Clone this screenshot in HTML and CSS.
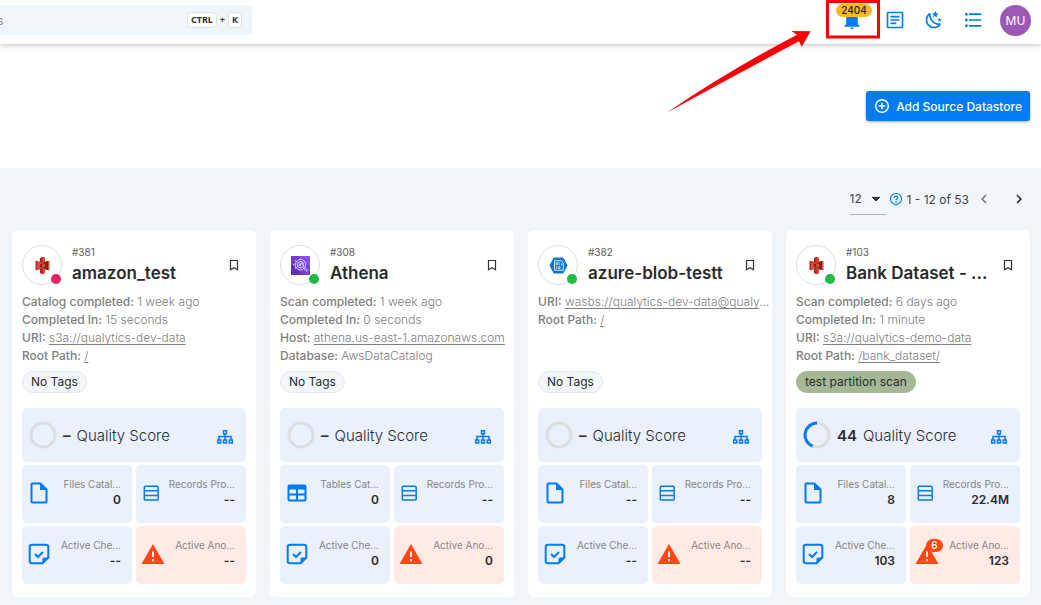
FILE: index.html
```html
<!DOCTYPE html>
<html lang="en">
<head>
<meta charset="utf-8">
<title>Datastores</title>
<meta name="viewport" content="width=device-width, initial-scale=1">
<link rel="stylesheet" href="styles.css">
</head>
<body>
<svg class="sprite" aria-hidden="true">
  <symbol id="i-s3" viewBox="-1 -1 26 26">
    <path fill="#8c1f14" d="M4 5.5 2.5 6v12l1.500.5 4-6.500z"/>
    <path fill="#e0483c" d="M4 5.500 12 7.500v9l-8 2z"/>
    <path fill="#8c1f14" d="M20 5.500 12 7.500v9l8 2z"/>
    <path fill="#b93126" d="m20 5.500 1.500.5v12l-1.500.5z"/>
    <path fill="#a32a20" d="M12 0 8.500 1.800v5.700l3.500 1 3.500-1V1.800zM12 24l-3.500-1.800v-5.700l3.500-1 3.500 1v5.700z"/>
    <path fill="#d8453a" d="m12 0 3.500 1.800v5.700l-3.500 1zM12 24l3.500-1.800v-5.700l-3.500-1z"/>
    <path fill="#8c1f14" d="M8.500 9.800 12 9.300v5.400l-3.500-.5z"/>
    <path fill="#e0483c" d="m15.500 9.800-3.500-.5v5.400l3.500-.5z"/>
  </symbol>
  <symbol id="i-athena" viewBox="0 0 24 24">
    <path fill="#7440d0" d="M0 0h24v24H0z"/>
    <path fill="#4d27a8" d="M0 10v14h14z" opacity=".6"/>
    <path fill="#a166ff" d="M10 0h14v14z" opacity=".45"/>
    <g fill="none" stroke="#e4d6ff" stroke-width="1.200">
      <circle cx="12" cy="11" r="6.500"/><circle cx="12" cy="11" r="4"/>
      <path d="M10.500 13V9.500M12.200 13V9h2v2.500M4 11H2.500M12 3V4.500M5 5.500l2 1.500M5 16l2-1.500"/>
      <path d="m15.500 15 1.300-1.300 4.500 4.500-1.500 1.500z"/>
    </g>
  </symbol>
  <symbol id="i-azure" viewBox="0 0 24 24">
    <path fill="#0b78d4" d="m.5 12 5.500-10h12l5.500 10-5.500 10H6z"/>
    <path fill="none" stroke="#fff" stroke-width="1.100" d="M7 6h8.500L18 8.500V18H7z"/>
    <path fill="none" stroke="#fff" stroke-width=".9" d="M9 8.500h1.800v2.500H9zM12.800 8v3.500M9.500 13v3.500M12 13.500h1.800v2.500H12zM15.700 9v3"/>
  </symbol>
  <symbol id="i-bell" viewBox="0 0 24 24"><path fill="currentColor" d="M21 19v1H3v-1l2-2v-6c0-3.100 2.030-5.830 5-6.710V4a2 2 0 0 1 4 0v.29c2.970.88 5 3.610 5 6.710v6zm-7 2a2 2 0 0 1-4 0"/></symbol>
  <symbol id="i-article" viewBox="0 0 24 24"><path fill="none" stroke="currentColor" stroke-width="2" d="M4 3h16q1 0 1 1v16q0 1-1 1H4q-1 0-1-1V4q0-1 1-1zM6.500 8h11M6.500 12h11M6.500 16h7"/></symbol>
  <symbol id="i-moon" viewBox="0 0 24 24"><path fill="currentColor" d="M17.750 4.090 15.220 6.030 16.130 9.090 13.500 7.280 10.870 9.090 11.780 6.030 9.250 4.090 12.440 4 13.500 1 14.560 4zM21.250 11 19.610 12.250 20.200 14.230 18.500 13.060 16.800 14.230 17.390 12.250 15.750 11 17.810 10.950 18.500 9 19.190 10.950zM18.970 15.950C19.800 15.870 20.690 17.050 20.160 17.800 19.840 18.250 19.500 18.670 19.080 19.070 15.170 23 8.840 23 4.940 19.070 1.030 15.170 1.030 8.830 4.940 4.930 5.340 4.530 5.760 4.170 6.210 3.850 6.960 3.320 8.140 4.210 8.060 5.040 7.790 7.900 8.750 10.870 10.950 13.060 13.140 15.260 16.100 16.220 18.970 15.950M17.330 17.970C14.500 17.810 11.700 16.640 9.530 14.500 7.360 12.310 6.200 9.500 6.040 6.680 3.230 9.820 3.340 14.640 6.350 17.660 9.370 20.670 14.190 20.780 17.330 17.970Z"/></symbol>
  <symbol id="i-list" viewBox="0 0 24 24"><path fill="currentColor" d="M7 4h15v2H7zM7 11h15v2H7zM7 18h15v2H7zM2.500 3.500h3v3h-3zM2.500 10.500h3v3h-3zM2.500 17.500h3v3h-3z"/></symbol>
  <symbol id="i-plus" viewBox="0 0 24 24"><path fill="none" stroke="currentColor" stroke-width="2.200" d="M12 2.500a9.500 9.500 0 1 1 0 19 9.500 9.500 0 0 1 0-19M12 7v10M7 12h10"/></symbol>
  <symbol id="i-help" viewBox="0 0 24 24"><path fill="none" stroke="currentColor" stroke-width="2" d="M12 2.500a9.500 9.500 0 1 1 0 19 9.500 9.500 0 0 1 0-19M9 10c0-4 6-4 6-.3 0 2.300-3 2.300-3 5"/><path fill="currentColor" d="M11 16h2v2.300h-2z"/></symbol>
  <symbol id="i-prev" viewBox="0 0 24 24"><path fill="currentColor" d="M15.410 16.580 10.830 12l4.580-4.590L14 6l-6 6 6 6z"/></symbol>
  <symbol id="i-next" viewBox="0 0 24 24"><path fill="currentColor" d="M8.590 16.580 13.170 12 8.590 7.410 10 6l6 6-6 6z"/></symbol>
  <symbol id="i-mark" viewBox="0 0 12 12"><path fill="none" stroke="currentColor" stroke-width="1.200" d="M2.500 1.500h7v9.200L6 8.700l-3.500 2z"/></symbol>
  <symbol id="i-tree" viewBox="0 0 18 16"><path fill="none" stroke="currentColor" stroke-width="1.500" d="M7.500 1.700h3v3h-3zM9 4.700v6M3 10.700V7.500h12v3.200M1.700 11h3v3h-3zM7.500 11h3v3h-3zM13.300 11h3v3h-3z"/></symbol>
  <symbol id="i-file" viewBox="0 0 24 24"><path fill="none" stroke="currentColor" stroke-width="2" d="M5 2.500h8.500L19.500 8.500v12q0 1-1 1h-13q-1 0-1-1V3.500q0-1 .5-1z"/><path fill="currentColor" d="M13 2v7h7z"/></symbol>
  <symbol id="i-table" viewBox="0 0 24 24"><path fill="currentColor" fill-rule="evenodd" d="M4.500 3.500h15a2 2 0 0 1 2 2v13a2 2 0 0 1-2 2h-15a2 2 0 0 1-2-2v-13a2 2 0 0 1 2-2M4.500 8.500v4H11v-4zM13 8.500v4h6.500v-4zM4.500 14.500v4H11v-4zM13 14.500v4h6.500v-4z"/></symbol>
  <symbol id="i-rows" viewBox="0 0 24 24"><path fill="none" stroke="currentColor" stroke-width="1.500" d="M4.500 5.200h11.500q1.200 0 1.200 1.200v11.500q0 1.200-1.200 1.200H4.500q-1.200 0-1.200-1.200V6.400q0-1.200 1.200-1.200zM3.500 9.800h13.500M3.500 14.500h13.500"/></symbol>
  <symbol id="i-check" viewBox="0 0 24 24"><path fill="none" stroke="currentColor" stroke-width="2" d="M15.500 21.300H5q-2.300 0-2.300-2.300V5Q2.700 2.700 5 2.700h14q2.300 0 2.300 2.300v10.500zM8 12l3 3 5-5"/><path fill="currentColor" d="M15.500 22v-5q0-1.500 1.500-1.500h5z"/></symbol>
  <symbol id="i-alert" viewBox="0 0 24 24"><path fill="currentColor" fill-rule="evenodd" d="M12 2 23.500 22H.5zM11 9.500v5.500h2V9.500zM11 17v2.200h2V17z"/></symbol>
</svg>

<header class="topbar">
  <div class="search">
    <input class="search-input" type="text" placeholder="s" aria-label="Search">
    <kbd>CTRL</kbd><span class="plus">+</span><kbd>K</kbd>
  </div>
  <nav class="actions">
    <button class="icon-btn bell" aria-label="Notifications"><svg><use href="#i-bell"/></svg><span class="count">2404</span></button>
    <button class="icon-btn" aria-label="News"><svg><use href="#i-article"/></svg></button>
    <button class="icon-btn" aria-label="Dark mode"><svg><use href="#i-moon"/></svg></button>
    <button class="icon-btn" aria-label="Menu"><svg><use href="#i-list"/></svg></button>
    <button class="user">MU</button>
  </nav>
  <svg class="callout" viewBox="0 0 214 113" aria-hidden="true">
    <path fill="none" stroke="#fb0007" stroke-width="3" d="M161.500 1.500h51v35.500h-51z"/>
    <path fill="#fb0007" d="M.7 112.700Q62 71 131 34.700L125.300 31l19.400.300-9 15.400-2.700-5.400Q68 76 .7 112.700z"/>
  </svg>
</header>

<section class="hero">
  <button class="add"><svg><use href="#i-plus"/></svg>Add Source Datastore</button>
</section>

<main class="content">
  <div class="pager">
    <select class="page-size" aria-label="Items per page"><option>12</option></select>
    <svg class="help"><use href="#i-help"/></svg>
    <span class="range">1 - 12 of 53</span>
    <button class="page-btn prev" aria-label="Previous page"><svg><use href="#i-prev"/></svg></button>
    <button class="page-btn" aria-label="Next page"><svg><use href="#i-next"/></svg></button>
  </div>

  <div class="cards">
    <article class="card">
      <div class="card-head">
        <div class="logo"><svg><use href="#i-s3"/></svg><i class="dot failed"></i></div>
        <div class="names"><span class="id">#381</span><h2>amazon_test</h2></div>
        <button class="mark" aria-label="Bookmark"><svg><use href="#i-mark"/></svg></button>
      </div>
      <div class="facts">
        <p><b>Catalog completed:</b> 1 week ago</p>
        <p><b>Completed In:</b> 15 seconds</p>
        <p><b>URI:</b> <a href="#">s3a://qualytics-dev-data</a></p>
        <p><b>Root Path:</b> <a href="#">/</a></p>
      </div>
      <span class="chip">No Tags</span>
      <div class="stats">
        <div class="score"><svg class="ring" viewBox="0 0 28 28"><circle cx="14" cy="14" r="12"/></svg><strong>–</strong><span>Quality Score</span><svg class="tree"><use href="#i-tree"/></svg></div>
        <div class="stat"><svg><use href="#i-file"/></svg><div><span>Files Catal...</span><b>0</b></div></div>
        <div class="stat"><svg><use href="#i-rows"/></svg><div><span>Records Pro...</span><b>--</b></div></div>
        <div class="stat"><svg><use href="#i-check"/></svg><div><span>Active Che...</span><b>--</b></div></div>
        <div class="stat warn"><svg><use href="#i-alert"/></svg><div><span>Active Ano...</span><b>--</b></div></div>
      </div>
    </article>

    <article class="card">
      <div class="card-head">
        <div class="logo"><svg><use href="#i-athena"/></svg><i class="dot"></i></div>
        <div class="names"><span class="id">#308</span><h2>Athena</h2></div>
        <button class="mark" aria-label="Bookmark"><svg><use href="#i-mark"/></svg></button>
      </div>
      <div class="facts">
        <p><b>Scan completed:</b> 1 week ago</p>
        <p><b>Completed In:</b> 0 seconds</p>
        <p><b>Host:</b> <a href="#">athena.us-east-1.amazonaws.com</a></p>
        <p><b>Database:</b> AwsDataCatalog</p>
      </div>
      <span class="chip">No Tags</span>
      <div class="stats">
        <div class="score"><svg class="ring" viewBox="0 0 28 28"><circle cx="14" cy="14" r="12"/></svg><strong>–</strong><span>Quality Score</span><svg class="tree"><use href="#i-tree"/></svg></div>
        <div class="stat"><svg><use href="#i-table"/></svg><div><span>Tables Cat...</span><b>0</b></div></div>
        <div class="stat"><svg><use href="#i-rows"/></svg><div><span>Records Pro...</span><b>--</b></div></div>
        <div class="stat"><svg><use href="#i-check"/></svg><div><span>Active Che...</span><b>0</b></div></div>
        <div class="stat warn"><svg><use href="#i-alert"/></svg><div><span>Active Ano...</span><b>0</b></div></div>
      </div>
    </article>

    <article class="card">
      <div class="card-head">
        <div class="logo"><svg><use href="#i-azure"/></svg><i class="dot"></i></div>
        <div class="names"><span class="id">#382</span><h2>azure-blob-testt</h2></div>
        <button class="mark" aria-label="Bookmark"><svg><use href="#i-mark"/></svg></button>
      </div>
      <div class="facts">
        <p><b>URI:</b> <a href="#">wasbs://qualytics-dev-data@qualy</a>...</p>
        <p><b>Root Path:</b> <a href="#">/</a></p>
      </div>
      <span class="chip">No Tags</span>
      <div class="stats">
        <div class="score"><svg class="ring" viewBox="0 0 28 28"><circle cx="14" cy="14" r="12"/></svg><strong>–</strong><span>Quality Score</span><svg class="tree"><use href="#i-tree"/></svg></div>
        <div class="stat"><svg><use href="#i-file"/></svg><div><span>Files Catal...</span><b>--</b></div></div>
        <div class="stat"><svg><use href="#i-rows"/></svg><div><span>Records Pro...</span><b>--</b></div></div>
        <div class="stat"><svg><use href="#i-check"/></svg><div><span>Active Che...</span><b>--</b></div></div>
        <div class="stat warn"><svg><use href="#i-alert"/></svg><div><span>Active Ano...</span><b>--</b></div></div>
      </div>
    </article>

    <article class="card">
      <div class="card-head">
        <div class="logo"><svg><use href="#i-s3"/></svg><i class="dot"></i></div>
        <div class="names"><span class="id">#103</span><h2>Bank Dataset - ...</h2></div>
        <button class="mark" aria-label="Bookmark"><svg><use href="#i-mark"/></svg></button>
      </div>
      <div class="facts">
        <p><b>Scan completed:</b> 6 days ago</p>
        <p><b>Completed In:</b> 1 minute</p>
        <p><b>URI:</b> <a href="#">s3a://qualytics-demo-data</a></p>
        <p><b>Root Path:</b> <a href="#">/bank_dataset/</a></p>
      </div>
      <span class="chip tag">test partition scan</span>
      <div class="stats">
        <div class="score"><svg class="ring" viewBox="0 0 28 28"><circle cx="14" cy="14" r="12"/><path d="M14 2A12 12 0 0 0 9.500 25.100"/></svg><strong>44</strong><span>Quality Score</span><svg class="tree"><use href="#i-tree"/></svg></div>
        <div class="stat"><svg><use href="#i-file"/></svg><div><span>Files Catal...</span><b>8</b></div></div>
        <div class="stat"><svg><use href="#i-rows"/></svg><div><span>Records Pro...</span><b>22.4M</b></div></div>
        <div class="stat"><svg><use href="#i-check"/></svg><div><span>Active Che...</span><b>103</b></div></div>
        <div class="stat warn"><svg><use href="#i-alert"/></svg><em class="alerts">6</em><div><span>Active Ano...</span><b>123</b></div></div>
      </div>
    </article>
  </div>
</main>
</body>
</html>
```
FILE: styles.css
```css
* { box-sizing: border-box; }
body {
  margin: 0;
  min-height: 100vh;
  display: flex;
  flex-direction: column;
  background: #fff;
  color: #2b2b2b;
  font-family: Inter, "Liberation Sans", sans-serif;
  font-size: 12px;
}
button, input, select { font: inherit; color: inherit; border: 0; background: none; padding: 0; margin: 0; }
button { cursor: pointer; }
h2, p { margin: 0; }
svg { display: block; flex: none; width: 24px; height: 24px; }
.sprite { position: absolute; width: 0; height: 0; }

.topbar {
  position: relative;
  z-index: 1;
  display: flex;
  justify-content: space-between;
  align-items: flex-start;
  height: 44px;
  padding: 5px 10px 0 0;
  background: #fff;
  box-shadow: 0 1px 5px rgba(0, 0, 0, .25);
}
.search {
  display: flex;
  align-items: center;
  width: 252px;
  height: 30px;
  padding-right: 10px;
  border-radius: 0 4px 4px 0;
  background: #f0f5fa;
}
.search-input { flex: 1; min-width: 0; height: 30px; text-indent: -3px; outline: 0; }
.search-input::placeholder { color: #85888b; opacity: 1; }
kbd {
  height: 16px;
  padding: 0 3px;
  border: 1px solid #dfe2e5;
  border-radius: 4px;
  background: #fff;
  font: 700 9px/14px "Noto Sans", sans-serif;
  color: #333;
}
.plus { padding: 0 3px; font: 700 9px/14px "Noto Sans", sans-serif; }
.actions { display: flex; align-items: center; gap: 15px; height: 30px; }
.icon-btn { position: relative; display: flex; justify-content: center; width: 24px; color: #007bf2; }
.icon-btn svg { width: 20px; height: 20px; }
.bell { width: 32px; }
.count {
  position: absolute;
  top: -6px;
  left: 0;
  width: 36px;
  border-radius: 7px;
  background: #fcb72b;
  color: #1c1c1c;
  font-size: 10px;
  font-weight: 500;
  line-height: 13px;
}
.user { width: 31px; height: 31px; border-radius: 50%; background: #9b59b6; color: #fff; font-size: 12px; }
.callout { position: absolute; top: 0; right: 161px; width: 214px; height: 113px; pointer-events: none; }

.hero { display: flex; justify-content: flex-end; height: 124px; padding: 47px 11px; }
.add {
  display: flex;
  align-items: center;
  gap: 6px;
  height: 30px;
  padding: 0 8px;
  border-radius: 3px;
  background: #007bf2;
  box-shadow: 0 1px 3px rgba(0, 0, 0, .35);
  color: #fff;
  font-weight: 500;
}
.add svg { width: 16px; height: 16px; }

.content { flex: 1; padding: 0 11px 8px 12px; background: #f0f5fa; }
.pager { display: flex; align-items: center; justify-content: flex-end; height: 62px; }
.page-size {
  appearance: none;
  width: 36px;
  height: 32px;
  border-bottom: 1px solid #adb1b5;
  background: conic-gradient(from -45deg at 50% 100%, #333 90deg, transparent 0) 22px 14px / 8px 4px no-repeat;
  color: #444;
}
.help { width: 14px; height: 14px; margin: 0 4px 0 3px; color: #007bf2; }
.range { color: #444; }
.page-btn { display: flex; justify-content: center; width: 22px; color: #222; }
.page-btn svg { width: 18px; height: 18px; }
.prev { margin: 0 13px 0 4px; color: #777; }

.cards { display: grid; grid-template-columns: repeat(4, minmax(0, 1fr)); gap: 14px; }
.card { padding: 15px 10px 13px; border-radius: 6px; background: #fff; }
.card-head { display: flex; height: 41px; }
.logo {
  position: relative;
  display: flex;
  align-items: center;
  justify-content: center;
  width: 40px;
  height: 40px;
  margin-right: 10px;
  border: 1px solid #dfdfdf;
  border-radius: 50%;
}
.logo svg { width: 19px; height: 19px; }
.dot { position: absolute; right: 0; bottom: 0; width: 10px; height: 10px; border-radius: 50%; background: #21ba45; }
.failed { background: #e91e63; }
.names { flex: 1; min-width: 0; }
.id { display: block; color: #5c5c5c; font-size: 10px; line-height: 14px; }
h2 { font-size: 17px; font-weight: 600; line-height: 28px; white-space: nowrap; }
.mark { height: 12px; margin: 14px 6px 0 0; color: #333; }
.mark svg { width: 12px; height: 12px; }
.facts { height: 72px; margin: 7px 0 6px; color: #808080; line-height: 18px; }
.facts p { white-space: nowrap; font-weight: 300; }
.facts b { font-weight: 500; }
.facts a { color: inherit; text-underline-offset: 2px; }
.chip {
  display: inline-block;
  height: 22px;
  padding: 0 8px;
  border: 1px solid #dfeaf5;
  border-radius: 11px;
  background: #f3f7fc;
  line-height: 20px;
  vertical-align: top;
}
.tag { border-color: #a5b896; background: #a5b896; }
.stats { display: grid; grid-template-columns: repeat(2, minmax(0, 1fr)); gap: 3px 4px; margin-top: 15px; }
.score, .stat { display: flex; align-items: center; border-radius: 5px; background: #eaf0fc; }
.score { grid-column: span 2; height: 54px; padding: 0 12px 0 7px; font-size: 15px; font-weight: 300; }
.score strong { margin: 0 6px; font-weight: 600; }
.ring { width: 28px; height: 28px; fill: none; stroke: #dcdedf; stroke-width: 3; }
.ring path { stroke: #007bf2; }
.tree { width: 18px; height: 16px; margin: 3px 0 0 auto; color: #007bf2; }
.stat { position: relative; justify-content: space-between; height: 58px; padding: 0 11px 2px 5px; color: #007bf2; }
.stat div { min-width: 0; padding-bottom: 2px; text-align: right; line-height: 16px; }
.stat span { display: block; color: #868686; font-size: 10px; white-space: nowrap; }
.stat b { display: block; color: #2b2b2b; font-weight: 600; }
.warn { background: #ffeae5; color: #ff4713; }
.alerts {
  position: absolute;
  top: 13px;
  left: 16px;
  width: 17px;
  border-radius: 7px;
  background: #ff4713;
  color: #fff;
  font-size: 10px;
  font-style: normal;
  font-weight: 500;
  line-height: 13px;
  text-align: center;
}
```
